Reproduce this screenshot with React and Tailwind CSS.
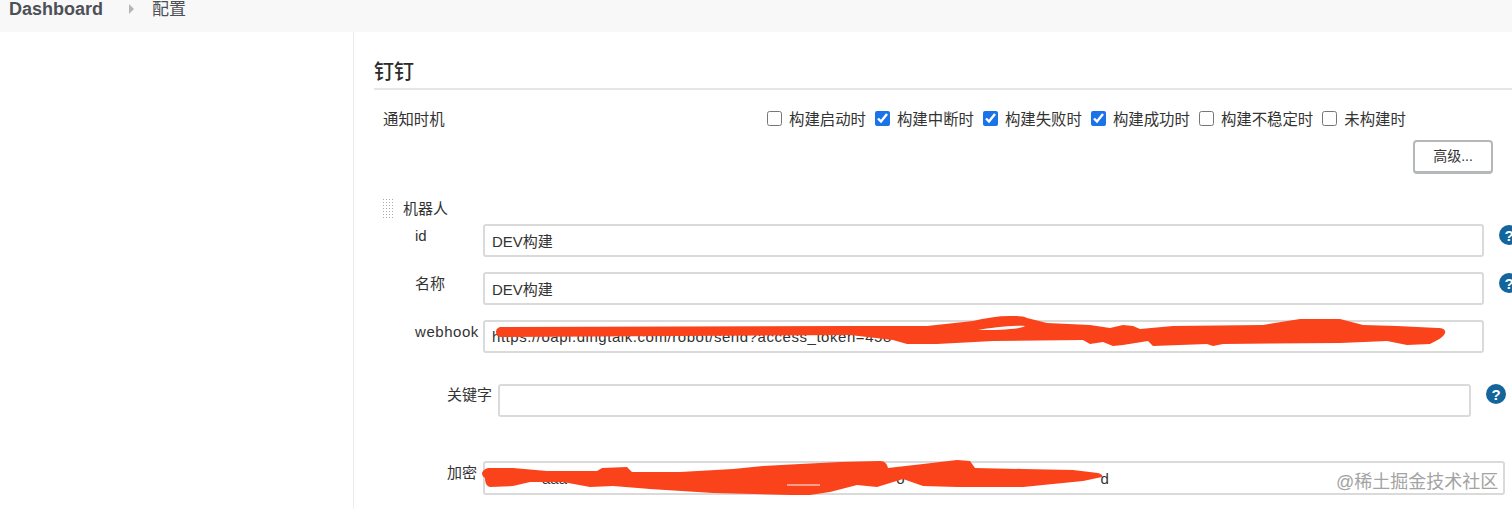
import { Fragment } from "react";

const triggers = [
  { label: "构建启动时", checked: false },
  { label: "构建中断时", checked: true },
  { label: "构建失败时", checked: true },
  { label: "构建成功时", checked: true },
  { label: "构建不稳定时", checked: false },
  { label: "未构建时", checked: false },
];

// the secret is scribbled over, only these stray characters show through
const secretValue = `${" ".repeat(12)}aaa${" ".repeat(79)}o${" ".repeat(47)}d`;

function HelpIcon({ className }) {
  return (
    <span
      className={`flex h-[20px] w-[20px] shrink-0 items-center justify-center rounded-full bg-[#13659b] text-[15px] leading-none font-bold text-white ${className}`}
    >
      ?
    </span>
  );
}

function TextInput({ value, className }) {
  return (
    <input
      readOnly
      value={value}
      className={`h-[33px] shrink-0 rounded-[3px] border-2 border-[#dadada] bg-white px-[7px] text-[15px] whitespace-pre text-[#333] outline-none ${className}`}
    />
  );
}

function App() {
  return (
    <div
      className="relative h-[509px] w-[1512px] overflow-hidden bg-white text-[#333]"
      style={{ fontFamily: '"Liberation Sans", "Noto Sans CJK SC", sans-serif' }}
    >
      <header className="flex h-[32px] items-start bg-[#f8f8f8] pl-[9px] text-[#4d5157]">
        <span className="text-[18px] leading-[19px] font-bold">Dashboard</span>
        <span className="mt-[4px] ml-[26px] h-0 w-0 border-y-[5px] border-l-[5px] border-y-transparent border-l-[#b5b5b5]" />
        <span className="ml-[18px] text-[17px] leading-[19px]">配置</span>
      </header>

      <div className="flex h-[477px]">
        <aside className="w-[354px] shrink-0 border-r border-[#ececec]" />

        <main className="min-w-0 flex-1 pl-[20px]">
          <h2 className="h-[58px] border-b-2 border-[#e6e6e6] pt-[26px] text-[20px] leading-[28px] font-medium text-[#2b2b2b]">
            钉钉
          </h2>

          <div className="mt-[19px] flex h-[20px] items-center text-[15.4px]">
            <span className="mt-[1px] ml-[9px] w-[384px] shrink-0">通知时机</span>
            <div className="flex items-center">
              {triggers.map((item) => (
                <Fragment key={item.label}>
                  <input
                    type="checkbox"
                    readOnly
                    checked={item.checked}
                    className="-mt-[1px] h-[15px] w-[15px] shrink-0 accent-[#1a73e8]"
                  />
                  <span className="mt-[1px] mr-[9px] ml-[7px] shrink-0">{item.label}</span>
                </Fragment>
              ))}
            </div>
          </div>

          <div className="mt-[11px] flex justify-end pr-[19px]">
            <button className="h-[34px] w-[80px] rounded-[4px] border-2 border-b-[3px] border-[#b4b8b8] bg-white text-[14px] text-[#333]">
              高级...
            </button>
          </div>

          <div className="mt-[24px] flex h-[22px] items-center text-[15px]">
            <span className="ml-[8px] h-[22px] w-[13px] bg-[radial-gradient(#aaaaaa_1px,transparent_1px)] bg-[length:3px_3px]" />
            <span className="ml-[8px]">机器人</span>
          </div>

          <div className="mt-[4px] flex pl-[41px] text-[15px]">
            <span className="h-[24px] w-[68px] shrink-0 leading-[24px]">id</span>
            <TextInput value="DEV构建" className="w-[1001px]" />
            <HelpIcon className="mt-[1px] ml-[15px]" />
          </div>

          <div className="mt-[15px] flex pl-[41px] text-[15px]">
            <span className="h-[24px] w-[68px] shrink-0 leading-[24px]">名称</span>
            <TextInput value="DEV构建" className="w-[1001px]" />
            <HelpIcon className="mt-[1px] ml-[15px]" />
          </div>

          <div className="mt-[15px] flex pl-[41px] text-[15px]">
            <span className="h-[24px] w-[68px] shrink-0 leading-[24px] tracking-[0.55px]">webhook</span>
            <TextInput
              value="https://oapi.dingtalk.com/robot/send?access_token=458"
              className="w-[1001px] tracking-[0.55px]"
            />
          </div>

          <div className="mt-[31px] flex pl-[73px] text-[15px]">
            <span className="h-[22px] w-[51px] shrink-0 leading-[22px]">关键字</span>
            <TextInput value="" className="w-[973px]" />
            <HelpIcon className="ml-[15px]" />
          </div>

          <div className="mt-[44px] flex pl-[73px] text-[15px]">
            <span className="h-[24px] w-[36px] shrink-0 leading-[24px]">加密</span>
            <TextInput value={secretValue} className="h-[34px] w-[1022px]" />
          </div>
        </main>
      </div>

      {/* hand drawn redaction marks on top of the form */}
      <svg className="absolute top-0 left-0" width="1512" height="509" viewBox="0 0 1512 509" fill="none">
        <path
          fill="#fb431b"
          d="M496 332C496 329 498 327 502 327L850 326L927 326L973 321C985 318 998 316 1010 316C1018 316 1023 316 1027 318L1047 323L1090 325L1110 328L1123 325L1133 326L1140 329L1173 326L1263 325L1300 319L1340 319L1363 325L1397 326L1438 328C1443 328 1446 330 1445 333C1444 337 1436 341 1430 344L1407 345L1387 341L1340 343L1223 344L1213 346L1207 344L1153 346L1148 341L1123 345L1113 346L1103 342L1090 344L1083 340L993 341L937 344L907 344L893 340L850 335L502 337C498 337 496 335 496 332Z"
        />
        <path fill="#fbfbfb" d="M978 330C990 328 1010 325 1025 326C1022 329 1000 330 978 330Z" />
        <path
          fill="#fb431b"
          d="M482 473C483 470 486 468 490 468L513 468L547 471L597 471L602 468L627 467L632 472L680 472L733 469L763 466L800 464L840 462L880 461C885 461 887 464 888 468L923 464L957 460L970 461L975 468L1023 469L1073 470L1098 473C1102 474 1103 476 1102 477L1083 481L1023 487L957 487L923 486L903 479L877 487L857 485L830 492L810 495L790 495L713 493L650 489L613 486L590 487L563 482L530 482L513 486L490 487C486 486 485 482 485 478C483 477 482 475 482 473Z"
        />
        <path fill="#fbfbfb" d="M787 484.5L820 484.5L820 485.5L787 485.5Z" />
      </svg>

      <span className="absolute top-[470px] left-[1336px] text-[18px] leading-[24px] text-[#a3a3a3]">
        @稀土掘金技术社区
      </span>
    </div>
  );
}

export default App;
